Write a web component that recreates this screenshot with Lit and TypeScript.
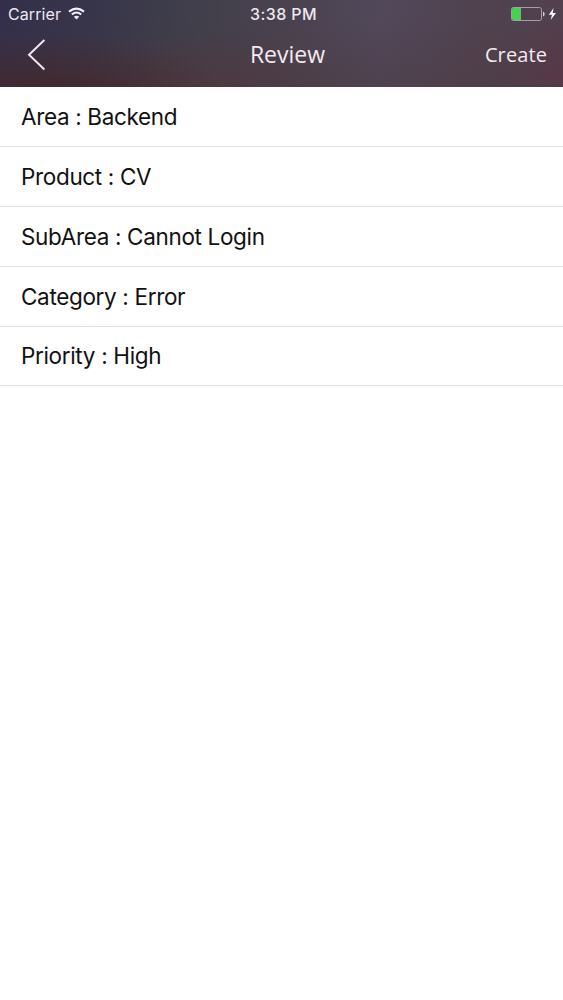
import { LitElement, html, css } from "lit";
import { customElement, property } from "lit/decorators.js";

@customElement("status-bar")
class StatusBar extends LitElement {
  static styles = css`
    :host {
      display: grid;
      grid-template-columns: 1fr auto 1fr;
      align-items: center;
      height: 28px;
      padding: 0 6px 0 8px;
      box-sizing: border-box;
      color: #eee8f2;
      font: 400 16px/28px Inter, sans-serif;
    }
    .left, .right { display: flex; align-items: center; }
    .carrier { letter-spacing: 0.1px; }
    .wifi { margin: 0 0 2px 7px; }
    .right { justify-content: flex-end; }
    .time { font-weight: 500; letter-spacing: 0.4px; padding-left: 2px; }
    svg { display: block; }
  `;
  render() {
    return html`
      <div class="left">
        <span class="carrier">Carrier</span>
        <svg class="wifi" width="17" height="13" viewBox="0 0 17 13" fill="none" stroke="#f3eef7" stroke-width="2">
          <path d="M1 4.6Q8.500-1.400 16 4.600M3.800 7.500Q8.500 3.500 13.200 7.500" />
          <path d="M5.800 9.700Q8.500 7.600 11.200 9.700L8.500 12.500Z" fill="#f3eef7" stroke="none" />
        </svg>
      </div>
      <span class="time">3:38 PM</span>
      <div class="right">
        <svg width="47" height="16" viewBox="0 0 47 16">
          <rect x="1.500" y="1.500" width="30" height="13" rx="2" fill="none" stroke="#a79cab" />
          <path d="M3.500 2H11V14H3.500Q2 14 2 12.500V3.500Q2 2 3.500 2Z" fill="#45d255" />
          <path d="M33 5.500Q34.700 6.200 34.700 8T33 10.500Z" fill="#d9ced9" />
          <path d="M43.600 2L38.800 8.800H42L40.600 14L46 7H42.700Z" fill="#fff" />
        </svg>
      </div>
    `;
  }
}

@customElement("nav-bar")
class NavBar extends LitElement {
  @property() heading = "";
  @property() action = "";
  static styles = css`
    :host {
      display: grid;
      grid-template-columns: 1fr auto 1fr;
      align-items: center;
      height: 54px;
      padding: 0 16px 0 26px;
      box-sizing: border-box;
      color: #f3eaf2;
      font-family: "Open Sans", "Noto Sans", sans-serif;
    }
    button {
      border: 0;
      padding: 0;
      background: none;
      color: inherit;
      font: 400 20px/54px "Open Sans", "Noto Sans", sans-serif;
    }
    .back { justify-self: start; }
    .action { justify-self: end; letter-spacing: 0.1px; }
    .title { font-size: 23px; line-height: 52px; padding: 0 0 2px 2px; }
    svg { display: block; }
  `;
  render() {
    return html`
      <button class="back" aria-label="Back">
        <svg width="22" height="34" viewBox="0 0 22 34" fill="none" stroke="#f3eaf2" stroke-width="1.900">
          <path d="M18.400 2L3 16.700L18.400 31.500" />
        </svg>
      </button>
      <span class="title">${this.heading}</span>
      <button class="action">${this.action}</button>
    `;
  }
}

@customElement("app-root")
class AppRoot extends LitElement {
  static styles = css`
    :host { display: block; height: 1000px; overflow: hidden; background: #fff; }
    header {
      height: 87px;
      background:
        radial-gradient(ellipse 180px 65px at 50px 98px, rgba(66, 34, 36, 0.75), transparent),
        radial-gradient(ellipse 60px 60px at 563px 78px, rgba(92, 52, 70, 0.6), transparent),
        radial-gradient(ellipse 140px 55px at 200px 90px, rgba(82, 54, 62, 0.6), transparent),
        linear-gradient(180deg, transparent 20%, rgba(76, 56, 62, 0.4)),
        linear-gradient(90deg, #332f4b 0, #37354a 90px, #403f4b 190px, #4b424f 290px, #51485a 380px, #50424f 480px, #52404f 563px);
    }
    ul { list-style: none; margin: 0; padding: 0; }
    li {
      height: 60px;
      box-sizing: border-box;
      padding-left: 21px;
      border-bottom: 1px solid #dfe2e2;
      color: #111;
      font: 400 22.500px/60px Inter, sans-serif;
      letter-spacing: -0.340px;
      white-space: pre;
    }
    li:last-child { height: 59px; line-height: 58px; }
  `;
  private rows = [
    ["Area", "Backend"],
    ["Product", "CV"],
    ["SubArea", "Cannot Login"],
    ["Category", "Error"],
    ["Priority", "High"],
  ];
  render() {
    return html`
      <header>
        <status-bar></status-bar>
        <nav-bar heading="Review" action="Create"></nav-bar>
      </header>
      <ul>${this.rows.map(([name, value]) => html`<li>${name} : ${value}</li>`)}</ul>
    `;
  }
}
